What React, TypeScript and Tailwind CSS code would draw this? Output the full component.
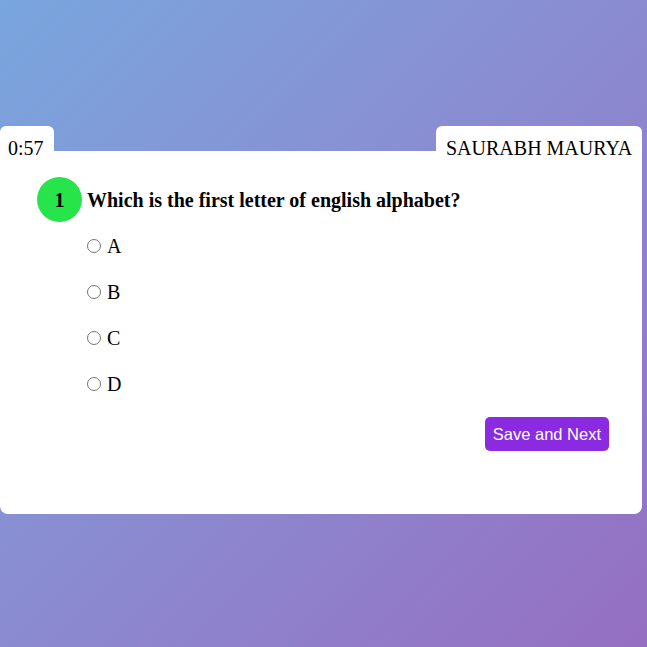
import React, { useState } from 'react';

const options = ['A', 'B', 'C', 'D'];

export default function App() {
  const [picked, setPicked] = useState<string | null>(null);

  return (
    <div className="min-h-[647px] w-full bg-gradient-to-br from-[#78a6de] to-[#956ec2] pt-[126px] font-['Liberation_Serif',serif] text-black">
      <div className="w-[642px]">
        {/* tabs */}
        <div className="flex items-end justify-between">
          <div className="h-[25px] w-[54px] rounded-t-[6px] bg-white pl-[8px] pt-[11px] text-[20px] leading-[22px]">
            0:57
          </div>
          <div className="h-[25px] w-[206px] rounded-t-[6px] bg-white pl-[10px] pt-[11px] text-[20px] leading-[22px]">
            SAURABH MAURYA
          </div>
        </div>

        {/* body */}
        <div className="h-[363px] rounded-b-[8px] bg-white pt-[26px]">
          <div className="flex items-center pl-[37px]">
            <div className="flex h-[45px] w-[45px] items-center justify-center rounded-full bg-[#26e44a] text-[20px] font-bold">
              1
            </div>
            <div className="ml-[5px] text-[20px] font-bold">Which is the first letter of english alphabet?</div>
          </div>

          <div className="mt-[13px] flex flex-col gap-[25px] pl-[87px]">
            {options.map((o) => (
              <label key={o} className="flex h-[21px] cursor-pointer items-center text-[20px]">
                <input
                  type="radio"
                  name="q1"
                  checked={picked === o}
                  onChange={() => setPicked(o)}
                  className="m-0 h-[14px] w-[14px]"
                />
                <span className="ml-[6px] leading-[22px]">{o}</span>
              </label>
            ))}
          </div>

          <div className="mt-[23px] flex justify-end pr-[33px]">
            <button className="h-[34px] rounded-[5px] bg-[#8a2be2] px-[8px] font-['Liberation_Sans',Arial,sans-serif] text-[16.5px] text-white">
              Save and Next
            </button>
          </div>
        </div>
      </div>
    </div>
  );
}
